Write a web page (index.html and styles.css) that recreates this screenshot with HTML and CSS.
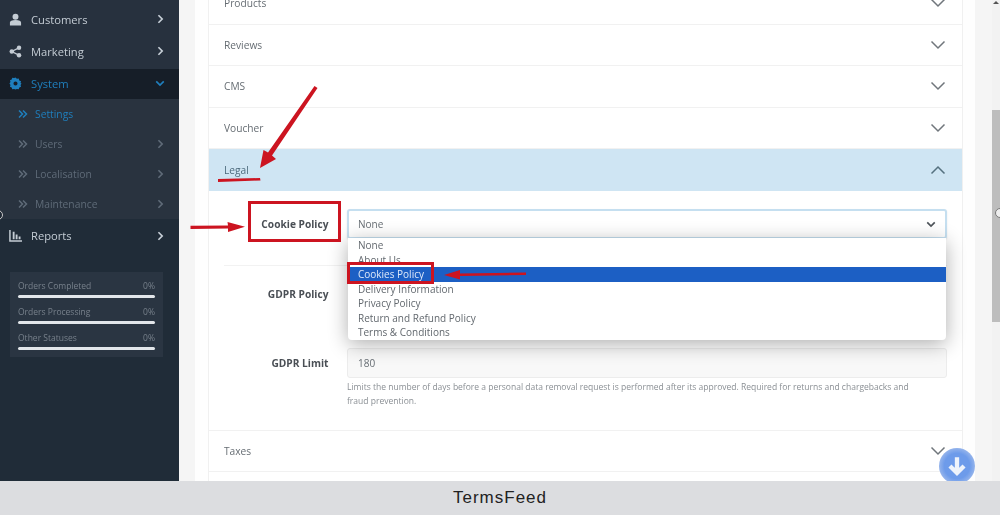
FILE: index.html
```html
<!DOCTYPE html>
<html lang="en">
<head>
<meta charset="utf-8">
<title>Legal settings</title>
<link rel="stylesheet" href="styles.css">
</head>
<body>
<svg width="0" height="0" class="defs">
  <symbol id="chev-r" viewBox="0 0 8 12"><path d="M1.500 1.500 6 6l-4.500 4.500" fill="none" stroke="currentColor" stroke-width="2"/></symbol>
  <symbol id="chev-d" viewBox="0 0 12 8"><path d="M1.500 1.500 6 6l4.500-4.500" fill="none" stroke="currentColor" stroke-width="2"/></symbol>
  <symbol id="dbl" viewBox="0 0 10 10"><path d="M1 1.500 4.500 5 1 8.500M5 1.500 8.500 5 5 8.500" fill="none" stroke="currentColor" stroke-width="1.500"/></symbol>
  <symbol id="acc" viewBox="0 0 16 10"><path d="M1.500 1.500 8 8l6.500-6.500" fill="none" stroke="currentColor" stroke-width="1.500"/></symbol>
</svg>
<div class="app">
  <aside class="sidebar">
    <ul class="nav">
      <li class="nav-item nav-item-top">
        <svg class="nav-icon" viewBox="0 0 14 14"><circle cx="7" cy="4" r="3.200" fill="currentColor"/><path d="M1 13.500V10.500C1 8.500 3 7.500 7 7.500s6 1 6 3v3z" fill="currentColor"/></svg>
        <span class="nav-label">Customers</span>
        <svg class="nav-chev"><use href="#chev-r"/></svg>
      </li>
      <li class="nav-item nav-item-top">
        <svg class="nav-icon" viewBox="0 0 14 14"><path d="M3 7 10.500 3M3 7l7.500 4" stroke="currentColor" stroke-width="1.500"/><circle cx="3" cy="7" r="2.400" fill="currentColor"/><circle cx="10.800" cy="3" r="2.400" fill="currentColor"/><circle cx="10.800" cy="11" r="2.400" fill="currentColor"/></svg>
        <span class="nav-label">Marketing</span>
        <svg class="nav-chev"><use href="#chev-r"/></svg>
      </li>
      <li class="nav-item nav-item-active">
        <svg class="nav-icon" viewBox="0 0 14 14"><path fill-rule="evenodd" fill="currentColor" d="M7 .500 8.500 2l2-.300.600 2 1.900.800-.600 2L13.500 7l-1.100 1.500.600 2-1.900.800-.600 2-2-.300L7 13.500 5.500 13l-2 .300-.600-2-1.900-.800.600-2L.500 7l1.100-1.500-.600-2 1.900-.800.600-2 2 .300zM7 4.800a2.200 2.200 0 1 0 0 4.400 2.200 2.200 0 0 0 0-4.400z"/></svg>
        <span class="nav-label">System</span>
        <svg class="nav-chev-d"><use href="#chev-d"/></svg>
      </li>
      <li class="sub-item sub-item-active">
        <svg class="sub-icon"><use href="#dbl"/></svg>
        <span class="nav-label">Settings</span>
      </li>
      <li class="sub-item">
        <svg class="sub-icon"><use href="#dbl"/></svg>
        <span class="nav-label">Users</span>
        <svg class="nav-chev"><use href="#chev-r"/></svg>
      </li>
      <li class="sub-item">
        <svg class="sub-icon"><use href="#dbl"/></svg>
        <span class="nav-label">Localisation</span>
        <svg class="nav-chev"><use href="#chev-r"/></svg>
      </li>
      <li class="sub-item">
        <svg class="sub-icon"><use href="#dbl"/></svg>
        <span class="nav-label">Maintenance</span>
        <svg class="nav-chev"><use href="#chev-r"/></svg>
      </li>
      <li class="nav-item nav-item-last">
        <svg class="nav-icon" viewBox="0 0 14 14"><path d="M1 1v12h13" fill="none" stroke="currentColor" stroke-width="1.600"/><path d="M4 3h2v8H4zM7.200 6h2v5h-2zM10.400 8h2v3h-2z" fill="currentColor"/></svg>
        <span class="nav-label">Reports</span>
        <svg class="nav-chev"><use href="#chev-r"/></svg>
      </li>
    </ul>
    <div class="stats">
      <div class="stat"><div class="stat-head"><span>Orders Completed</span><span>0%</span></div><div class="stat-bar"></div></div>
      <div class="stat"><div class="stat-head"><span>Orders Processing</span><span>0%</span></div><div class="stat-bar"></div></div>
      <div class="stat"><div class="stat-head"><span>Other Statuses</span><span>0%</span></div><div class="stat-bar"></div></div>
    </div>
  </aside>
  <main class="content">
    <div class="panel">
      <div class="accordion">
        <div class="acc-row"><span>Products</span><svg class="acc-icon"><use href="#acc"/></svg></div>
        <div class="acc-row"><span>Reviews</span><svg class="acc-icon"><use href="#acc"/></svg></div>
        <div class="acc-row"><span>CMS</span><svg class="acc-icon"><use href="#acc"/></svg></div>
        <div class="acc-row"><span>Voucher</span><svg class="acc-icon"><use href="#acc"/></svg></div>
        <div class="acc-row acc-row-open"><span>Legal</span><svg class="acc-icon acc-icon-up"><use href="#acc"/></svg></div>
        <div class="acc-body">
          <div class="form-row form-row-cookie">
            <label class="form-label">Cookie Policy</label>
            <div class="form-field">
              <div class="select select-focus"><span>None</span><svg class="select-chev"><use href="#chev-d"/></svg></div>
            </div>
          </div>
          <div class="form-row form-row-gdpr">
            <label class="form-label">GDPR Policy</label>
            <div class="form-field"><div class="select select-hidden"><span></span></div></div>
          </div>
          <div class="form-row form-row-limit">
            <label class="form-label">GDPR Limit</label>
            <div class="form-field">
              <div class="select select-muted"><span>180</span></div>
              <p class="help">Limits the number of days before a personal data removal request is performed after its approved. Required for returns and chargebacks and fraud prevention.</p>
            </div>
          </div>
        </div>
        <div class="acc-row"><span>Taxes</span><svg class="acc-icon"><use href="#acc"/></svg></div>
        <div class="acc-row"></div>
      </div>
    </div>
    <div class="scrollbar">
      <svg class="scroll-up" viewBox="0 0 8 4"><path d="M4 0 8 4H0z" fill="#555"/></svg>
      <div class="scroll-thumb"></div>
    </div>
    <ul class="dropdown">
      <li>None</li>
      <li>About Us</li>
      <li class="dropdown-active">Cookies Policy</li>
      <li>Delivery Information</li>
      <li>Privacy Policy</li>
      <li>Return and Refund Policy</li>
      <li>Terms &amp; Conditions</li>
    </ul>
    <svg class="marks" viewBox="0 0 1000 481" aria-hidden="true">
      <g fill="#cc1420" stroke="none">
        <path d="M314.500 86 317.500 88 272 155.500 276 159 260 168 263.500 150 268 152.500z"/>
        <path d="M218 179 260 178 260.500 180.500 218 182z"/>
        <path d="M190.500 225.800 228 225.500 227.500 222 245 226.800 228 232 228 228.500 190.500 229z"/>
        <path d="M526 272.500 526 275 460 276 460 279.500 444 275 460 270 460 273.500z"/>
      </g>
      <g fill="none" stroke="#cc1420" stroke-width="3">
        <rect x="249.500" y="202.500" width="90" height="38"/>
        <rect x="348.500" y="263.500" width="84" height="19"/>
      </g>
    </svg>
    <div class="scroll-down">
      <svg viewBox="0 0 24 24"><path d="M12 4v14M5.500 12 12 18.500 18.500 12" fill="none" stroke="#eef3fb" stroke-width="4"/></svg>
    </div>
  </main>
  <span class="handle handle-left"></span>
  <span class="handle handle-right"></span>
</div>
<footer class="footer">TermsFeed</footer>
</body>
</html>
```

FILE: styles.css
```css
* { box-sizing: border-box; }
html, body { margin: 0; padding: 0; }
body {
  width: 1000px;
  height: 515px;
  overflow: hidden;
  display: flex;
  flex-direction: column;
  font-family: "Open Sans", "Noto Sans", sans-serif;
  background: #fff;
}
.defs { position: absolute; }
ul { list-style: none; margin: 0; padding: 0; }
p { margin: 0; }

.app {
  position: relative;
  height: 481px;
  display: flex;
  overflow: hidden;
  filter: blur(0.5px);
}

/* Sidebar */
.sidebar {
  width: 179px;
  flex: none;
  background: #202c38;
  color: #c4ccd4;
}
.nav { background: #27313e; padding-top: 4px; }
.nav-item, .sub-item {
  display: flex;
  align-items: center;
  font-size: 11.200px;
}
.nav-item { height: 32px; padding: 0 15px 2px 9px; }
.nav-icon { width: 13px; height: 13px; margin-right: 9px; flex: none; }
.nav-label { flex: 1; }
.nav-chev { width: 7px; height: 10px; color: #c8d0d8; }
.nav-item-active {
  background: #161e28;
  color: #1f7fbd;
  height: 30px;
  margin-top: 1px;
}
.nav-item-last { background: #202c38; padding-bottom: 0; height: 33px; }
.nav-chev-d { width: 10px; height: 7px; margin-right: -1px; color: #1f7fbd; }
.sub-item {
  height: 30px;
  padding: 0 15px 1px 18px;
  background: #29333f;
  color: #5f6b78;
  font-size: 10.300px;
}
.sub-item .nav-chev { color: #5f6b78; }
.sub-item-active { color: #1f7fbd; }
.sub-icon { width: 10px; height: 10px; margin-right: 7px; flex: none; }
.stats {
  margin: 20px 16px 0 10px;
  height: 85px;
  background: #2a3542;
  padding: 6px 8px 0;
  color: #77808b;
  font-size: 8.500px;
}
.stat { height: 26px; }
.stat-head { display: flex; justify-content: space-between; height: 16px; line-height: 16px; }
.stat-bar { height: 3px; background: #e2e6ea; border-radius: 2px; margin-top: 1px; }

/* Content */
.content {
  position: relative;
  flex: 1;
  display: flex;
  background: #f5f5f5;
  padding-left: 16px;
  overflow: hidden;
}
.panel {
  width: 780px;
  flex: none;
  background: #fefefe;
  padding: 0 12px 0 13px;
}
.accordion {
  margin-top: -17px;
  background: #fff;
  border-left: 1px solid #f0f0f0;
  border-right: 1px solid #f0f0f0;
}
.acc-row {
  height: 41.500px;
  display: flex;
  align-items: center;
  justify-content: space-between;
  padding: 0 16px 0 15px;
  font-size: 10.200px;
  color: #666d73;
  border-bottom: 1px solid #f1f1f1;
}
.acc-row-open {
  background: #cfe5f3;
  color: #4d6a7c;
  border-bottom: 0;
}
.acc-icon { width: 16px; height: 10px; color: #70767c; }
.acc-icon-up { transform: scaleY(-1); color: #55717f; }
.acc-body { height: 240px; border-bottom: 1px solid #f1f1f1; }
.form-row { display: flex; padding-right: 15px; }
.form-label {
  width: 119.500px;
  flex: none;
  text-align: right;
  font-size: 10.200px;
  font-weight: 700;
  color: #4a4f55;
  line-height: 30px;
}
.form-field { margin-left: 18.500px; flex: 1; }
.form-row-cookie { height: 75px; padding-top: 18.500px; position: relative; }
.form-row-cookie::after {
  content: "";
  position: absolute;
  left: 15px;
  right: 15px;
  bottom: 0;
  height: 1px;
  background: #f2f2f2;
}
.form-row-gdpr { height: 70px; padding-top: 13px; }
.form-row-limit { padding-top: 12px; }
.select {
  height: 30px;
  display: flex;
  align-items: center;
  justify-content: space-between;
  padding: 0 10px;
  border: 1px solid #ececec;
  border-radius: 3px;
  font-size: 10px;
  color: #666d73;
  background: #fff;
}
.select-focus {
  border: 2px solid #c5dff0;
  padding: 0 9px;
  box-shadow: 0 1px 2px rgba(0,0,0,.1);
}
.select-hidden { border-color: transparent; }
.select-muted { background: #f8f8f8; }
.select-chev { width: 10px; height: 7px; color: #4d5359; }
.help {
  margin-top: 2px;
  padding-right: 22px;
  font-size: 8.530px;
  line-height: 14px;
  color: #8a8f94;
}

/* Scrollbar */
.scrollbar {
  position: absolute;
  right: 0;
  top: 0;
  bottom: 0;
  width: 8px;
  background: #f2f2f2;
}
.scroll-up { position: absolute; left: 1px; top: 1px; width: 6px; height: 3px; }
.scroll-thumb { margin-top: 110px; height: 212px; background: #bdbdbd; }

/* Overlays */
.dropdown {
  position: absolute;
  left: 169px;
  top: 238px;
  width: 598px;
  height: 102px;
  background: #fff;
  border-radius: 0 0 4px 4px;
  box-shadow: 0 4px 20px rgba(0,0,0,.32);
  font-size: 10px;
  color: #62686e;
}
.dropdown li { height: 14.500px; line-height: 14.500px; padding-left: 10px; }
.dropdown .dropdown-active { background: #1c5fc4; color: #dfe9f8; }
.marks { position: absolute; left: -179px; top: 0; width: 1000px; height: 481px; pointer-events: none; }
.handle {
  position: absolute;
  width: 10px;
  height: 10px;
  border-radius: 50%;
  border: 1px solid #777;
  background: #eee;
}
.handle-left { left: -7px; top: 210px; background: #1e2833; border-color: #c8c8c8; }
.handle-right { right: -5px; top: 208px; }
.scroll-down {
  position: absolute;
  left: 760px;
  top: 448px;
  width: 36px;
  height: 36px;
  border-radius: 50%;
  background: radial-gradient(circle at 50% 50%, #6d9bea 50%, #a3bdec 78%, #d6dfec 100%);
  padding: 5px;
}
.scroll-down svg { width: 26px; height: 26px; display: block; }

/* Footer */
.footer {
  height: 34px;
  flex: none;
  background: #dcdde0;
  color: #222;
  font-family: "Liberation Sans", Arial, sans-serif;
  font-size: 17px;
  letter-spacing: 1px;
  text-align: center;
  line-height: 33px;
}
```
